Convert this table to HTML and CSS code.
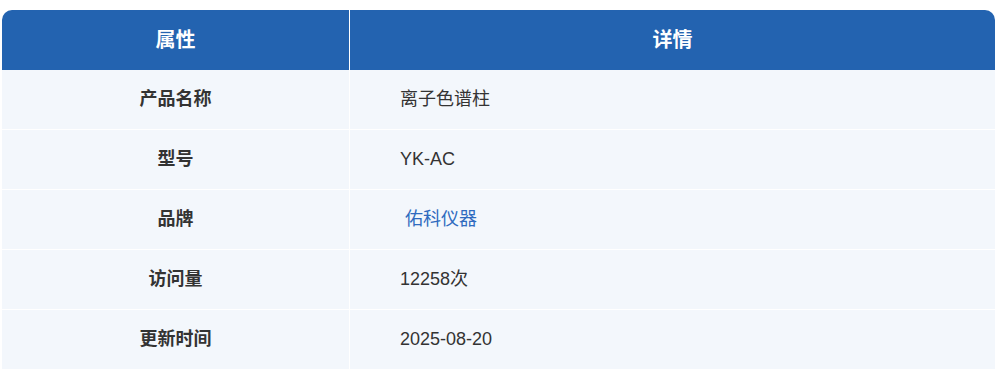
FILE: index.html
```html
<!DOCTYPE html>
<html lang="zh-CN">
<head>
<meta charset="utf-8">
<title>产品参数</title>
<link rel="stylesheet" href="styles.css">
</head>
<body>
<div class="wrap">
  <table class="spec">
    <colgroup><col class="c-attr"><col class="c-detail"></colgroup>
    <thead>
      <tr><th>属性</th><th>详情</th></tr>
    </thead>
    <tbody>
      <tr><td class="k">产品名称</td><td class="v">离子色谱柱</td></tr>
      <tr><td class="k">型号</td><td class="v">YK-AC</td></tr>
      <tr><td class="k">品牌</td><td class="v"><a class="brand" href="#">佑科仪器</a></td></tr>
      <tr><td class="k">访问量</td><td class="v">12258次</td></tr>
      <tr><td class="k">更新时间</td><td class="v">2025-08-20</td></tr>
    </tbody>
  </table>
</div>
</body>
</html>
```
FILE: styles.css
```css
html, body { margin: 0; padding: 0; background: #fff; }
body { font-family: "Liberation Sans", "Noto Sans CJK SC", sans-serif; color: #333; }
.wrap { padding: 10px 4px 0 2px; }
.spec {
  width: 993px;
  border-collapse: separate;
  border-spacing: 0;
  table-layout: fixed;
}
.c-attr { width: 348px; }
.spec th {
  background: #2363b0;
  color: #fff;
  font-size: 20px;
  font-weight: 700;
  height: 60px;
  line-height: 60px;
  padding: 0;
  text-align: center;
}
.spec th:first-child { border-top-left-radius: 10px; border-right: 1px solid #fff; }
.spec th:last-child { border-top-right-radius: 10px; }
.spec td {
  background: #f3f7fc;
  font-size: 18px;
  line-height: 59px;
  height: 59px;
  padding: 0;
  border-bottom: 1px solid #fff;
}
.spec td.k { text-align: center; font-weight: 700; border-right: 1px solid #fff; }
.spec td.v { text-align: left; padding-left: 50px; }
.brand { color: #2f6bbf; text-decoration: none; padding: 0 5px; }
```
